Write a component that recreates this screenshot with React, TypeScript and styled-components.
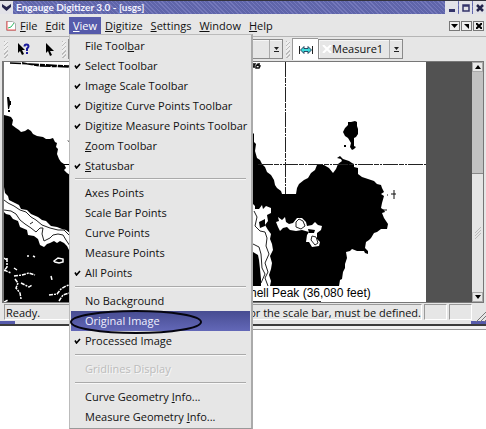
import React from 'react';
import styled, { createGlobalStyle, css } from 'styled-components';

const Global = createGlobalStyle`
  * { box-sizing: border-box; }
  body { margin: 0; background: #fff; font-family: "Open Sans", "Noto Sans", sans-serif; font-size: 11px; color: #111; }
  button, select { font: inherit; color: inherit; margin: 0; padding: 0; border: 0; background: none; }
`;

const Page = styled.div`
  position: relative;
  min-height: 100vh;
  overflow: hidden;
`;
const Window = styled.main`
  display: flex;
  flex-direction: column;
  background: #e6e6e6;
  border-top: 1px solid #33333d;
`;
const TitleBar = styled.header`
  display: flex;
  align-items: center;
  height: 13px;
  gap: 1px;
  background: repeating-linear-gradient(45deg, #7478bb 0 1px, #5f65aa 1px 3px);
`;
const Title = styled.h1`
  flex: 1;
  margin: 0 0 0 2px;
  font-family: Lato, "Open Sans", sans-serif;
  font-size: 10px;
  line-height: 13px;
  font-weight: 700;
  color: #f4f4ff;
  white-space: nowrap;
`;
const TitleButton = styled.button`
  display: flex;
  align-items: center;
  justify-content: center;
  width: 13px;
  height: 13px;
  background: #e2e2e8;
`;
const MenuBar = styled.nav`
  display: flex;
  align-items: center;
  height: 23px;
  padding: 1px 2px 0 6px;
  border-bottom: 1px solid #b5b5b5;
`;
const MenuTitle = styled.button<{ $open?: boolean }>`
  height: 17px;
  padding: 0 4px;
  line-height: 17px;
  white-space: nowrap;
  ${p => p.$open && css`background: #565bab; color: #fff;`}
`;
const Spacer = styled.div`
  flex: 1;
`;
const ChildButton = styled.button`
  display: flex;
  align-items: center;
  justify-content: center;
  width: 11px;
  height: 10px;
  margin-left: 1px;
  border: 1px solid #777;
  background: #eee;
`;
const ToolBar = styled.div`
  display: flex;
  align-items: center;
  height: 24px;
  padding-left: 4px;
`;
const Grip = styled.div`
  width: 4px;
  height: 17px;
  margin-right: 2px;
  background: repeating-linear-gradient(135deg, #bbb 0 1px, #eee 1px 3px);
`;
const ToolButton = styled.button<{ $pressed?: boolean }>`
  display: flex;
  flex: none;
  align-items: center;
  justify-content: center;
  width: 26px;
  height: 22px;
  ${p => p.$pressed && css`background: #fff; border: 1px solid #999; border-width: 1px 0 0 1px;`}
`;
const Combo = styled.label<{ $wide?: boolean }>`
  display: flex;
  flex: none;
  align-items: center;
  width: ${p => (p.$wide ? 215 : 85)}px;
  height: 20px;
  margin-right: 3px;
  padding-left: 3px;
  border: 1px solid #8a8a8a;
  box-shadow: inset 1px 1px #f6f6f6;
`;
const Select = styled.select`
  flex: 1;
  min-width: 0;
  appearance: none;
  line-height: 18px;
  outline: none;
`;
const ComboArrow = styled.span`
  display: flex;
  flex: none;
  align-items: center;
  justify-content: center;
  width: 13px;
  height: 18px;
  border-left: 1px solid #aaa;
`;
const Workspace = styled.section`
  display: flex;
  margin: 0 2px;
  border: 1px solid #777;
  border-width: 1px 1px 1px 2px;
  background: #525252;
`;
const MapCanvas = styled.svg`
  display: block;
  flex: none;
`;
const ScrollBar = styled.div`
  display: flex;
  flex-direction: column;
  width: 11px;
  margin-left: auto;
  background: #c2c2c2;
`;
const ScrollButton = styled.button`
  display: flex;
  align-items: center;
  justify-content: center;
  height: 10px;
  background: #e8e8e8;
  border: 1px solid #aaa;
`;
const ScrollTrack = styled.div`
  flex: 102;
`;
const ScrollThumb = styled.div`
  display: flex;
  flex: 120;
  align-items: center;
  justify-content: center;
  background: #e5e5e5;
  border-top: 1px solid #888;
`;
const StatusBar = styled.footer`
  display: flex;
  gap: 2px;
  height: 18px;
  padding: 1px 14px 0 4px;
  line-height: 16px;
  white-space: nowrap;
`;
const StatusField = styled.div<{ $small?: boolean }>`
  display: flex;
  justify-content: space-between;
  flex: ${p => (p.$small ? '0 0 23px' : '1')};
  height: 16px;
  padding: 0 0 0 1px;
  border: 1px solid #999;
  border-right-color: #fff;
  border-bottom-color: #fff;
`;
const FrameEdge = styled.div`
  display: flex;
  align-items: flex-end;
  justify-content: space-between;
  height: 5px;
  border-bottom: 2px solid #3c3c3c;
`;
const FrameCorner = styled.div`
  width: 15px;
  height: 3px;
  background: #565bab;
`;
const LowerEdge = styled.div`
  height: 4px;
  border-left: 250px solid #fff;
  background: linear-gradient(#f2f2f2 3px, #999 3px);
`;
const ResizeGrip = styled.svg`
  position: absolute;
  top: 312px;
  right: 0;
`;
const DropMenu = styled.div`
  position: absolute;
  top: 34px;
  left: 69px;
  width: 184px;
  padding: 1px;
  background: #e6e6e6;
  border: 1px solid #bbb;
  border-right: 2px solid #aaa;
  border-bottom-color: #999;
`;
const MenuItem = styled.button<{ $active?: boolean }>`
  display: flex;
  align-items: center;
  width: 100%;
  height: 20px;
  line-height: 20px;
  white-space: nowrap;
  text-align: left;
  ${p => p.$active && css`background: linear-gradient(#474c91, #6368b8); color: #f0f0ff;`}
  &:disabled { color: #bcbcbc; text-shadow: 1px 1px #f8f8f8; }
`;
const CheckSlot = styled.span`
  display: flex;
  width: 14px;
  padding-left: 3px;
`;
const Divider = styled.hr<{ $tight?: boolean }>`
  height: 2px;
  margin: ${p => (p.$tight ? 2 : 3)}px 4px 3px;
  border: 0;
  border-top: 1px solid #aaa;
  border-bottom: 1px solid #f8f8f8;
`;
const Marker = styled.svg`
  position: absolute;
  top: 309px;
  left: 69px;
  pointer-events: none;
`;

type Item = { text: string; key?: number; checked?: boolean; active?: boolean; disabled?: boolean };

const groups: Item[][] = [
  [
    { text: 'File Toolbar', key: 9 },
    { text: 'Select Toolbar', checked: true },
    { text: 'Image Scale Toolbar', checked: true },
    { text: 'Digitize Curve Points Toolbar', checked: true },
    { text: 'Digitize Measure Points Toolbar', checked: true },
    { text: 'Zoom Toolbar', key: 0 },
    { text: 'Statusbar', key: 0, checked: true },
  ],
  [
    { text: 'Axes Points' },
    { text: 'Scale Bar Points' },
    { text: 'Curve Points' },
    { text: 'Measure Points' },
    { text: 'All Points', checked: true },
  ],
  [
    { text: 'No Background' },
    { text: 'Original Image', active: true },
    { text: 'Processed Image', checked: true },
  ],
  [{ text: 'Gridlines Display', disabled: true }],
  [
    { text: 'Curve Geometry Info...', key: 15 },
    { text: 'Measure Geometry Info...', key: 17 },
  ],
];

const menuTitles = ['File', 'Edit', 'View', 'Digitize', 'Settings', 'Window', 'Help'];

const Mnemonic = ({ text, index }: { text: string; index?: number }) =>
  index === undefined ? <span>{text}</span> : (
    <span>{text.slice(0, index)}<u>{text[index]}</u>{text.slice(index + 1)}</span>
  );

const Down = () => (
  <svg width="5" height="7" viewBox="0 0 5 7"><path d="M0 1h5L2.500 4zM0 5h5v1H0z" fill="#222" /></svg>
);

function Coast() {
  return (
    <MapCanvas width="422" height="240" viewBox="4 62 422 240" aria-label="Scanned map">
      <path fill="#fff" d="M4 62h422v240H4z" />
      <path d="M10 63l20 1 39 2M22 63l18 3 29 1" stroke="#000" strokeWidth="1.500" strokeDasharray="11 1 5 1" fill="none" />
      <path d="M7 97h2l1 4h1v4h-1l-1 4H8zM8 110h2v2H8zM67 140l2 2v-1zM64 164h5v1h-5z" />
      <path d="M4 115L8 116 11 117 13 120 12 125 16 128 19 130 21 132 25 131 28 129 31 131 33 134 37 136 43 137 46 139 50 139 53 138 55 142 57 143 56 147 58 149 57 154 59 159 61 162 64 164 66 168 64 170 67 173 70 175V302H4z" />
      <path fill="#fff" d="M4 187L5 193 8 196 9 200 15 203 19 205 21 209 27 210 31 214 38 217 42 220 46 221 51 226 57 227 62 229 66 230 70 233V252L67 246 64 243 60 241 57 243 54 241 50 243 47 244 44 247 40 245 38 239 34 236 28 235 27 230 20 227 18 221 13 219 10 215 6 214 4 212z" />
      <path fill="none" stroke="#222" d="M4 200L8 203 14 206 20 210 26 212 31 217 36 220 42 225 50 228 58 230 64 230 70 236M4 210L11 211 16 214 20 220 25 224 31 228 36 232 40 228 43 228 42 234 44 241 50 238 53 235 58 234 63 235 66 240 70 246M30 224l3-2" />
      <path fill="none" stroke="#fff" strokeWidth="1.500" strokeDasharray="4 1 2 1" d="M4 258l3 2M7 258v9l-3 4M14 276l8-1 7-2 6 2M14 268l3 2M15 279l3 4-2 5 4 5 1 6M21 283l8 4 3-2M4 270l7 3M33 256l2 1M27 256h2M51 276l1 4M49 295l8-1 4-5 5-3 3-1M59 301l4-6 6-2M4 302l4-2" />
      <path d="M54 261l4-3 5 1v3l-4 1-4-1z" fill="none" stroke="#fff" strokeWidth="1.500" />
      <path d="M253 133L254 134 254 142 256 144 255 151 257 158 260 160 262 164 265 167 267 172 271 175 274 180 275 185 277 188 281 191 282 194H296L297 188 299 184 304 180 308 178 311 173 315 170 317 165 324 165 329 168 333 173 336 169 338 164 342 161 341 159 337 158 340 156 343 159 349 161 352 163 354 164 354 167 358 168 358 174 362 177 368 179 374 181 377 184 381 185 382 188 384 192 381 194 384 196 382 203 381 208 384 210 385 212 382 213 384 218 388 224 387 229 381 229 377 232 374 233 371 238 369 240 366 242 365 248 368 251 368 254 365 253 364 251 357 251 352 249 350 251 346 252 347 258 345 264 345 268 343 272 342 279 340 280 339 286H253z" />
      <path d="M348 122h3l4-1 2 1v4l1 3v5l-2 3-2 1v8l2 1-2 2-2 1-2-3 1-4-3-5-3-2-2-4 2-4 3-3zM344 145h2v2h-2z" />
      <path fill="#fff" d="M253 204L255 206 255 209 259 209 262 205 263 209 266 206 271 208 271 213 267 215 268 221 265 225 268 230 271 234 270 239 272 244 273 250 270 256 272 263 271 269 269 275 271 281 270 286H261L261 279 260 269 259 260 258 255 253 252zM276 222L279 221 278 217 282 220 285 217 286 222 289 224 293 223 297 218 302 218 306 222 307 226 312 225 315 222 318 225 322 226 321 230 317 233 317 239 320 242 319 246 312 247 309 242 306 242 307 235 309 232 302 230 296 231 290 230 287 227 283 228 280 231 278 227z" />
      <path d="M259 222L265 219 265 226 260 228zM308 229L315 230 314 233 309 233z" />
      <path fill="none" stroke="#222" d="M254 211L257 217 255 226 260 231 265 232 267 238 266 246 269 254 265 263 268 272 265 278 268 286M253 244L259 247 261 254 262 268 265 274 261 283M299 219L303 221 305 226 301 229 296 227 296 222zM312 236L316 237 318 243 315 245 311 240z" />
      <path stroke="#222" fill="none" strokeDasharray="15 1 5 1 2 1" d="M285.500 62v132M258 164.500h168" />
      <path d="M394 190v9M391 194h5M387 195h1M383 210h4" stroke="#111" fill="none" />
      <path fill="none" stroke="#111" strokeWidth="1.500" d="M253 64h2l-2 3h2M260 64h-2l-2 2v2h3l1-2-3-1" />
      <path d="M253 301.500h68" stroke="#333" />
      <text x="250" y="297" fontFamily='"Liberation Sans", sans-serif' fontSize="12">hell Peak (36,080 feet)</text>
    </MapCanvas>
  );
}

export default function App() {
  return (
    <Page>
      <Global />
      <Window>
        <TitleBar>
          <TitleButton aria-label="Window menu">
            <svg width="9" height="8" viewBox="0 0 9 8"><path d="M0 0l4.500 3L9 0v3L4.500 7 0 3z" fill="#24244c" /></svg>
          </TitleButton>
          <Title>Engauge Digitizer 3.0 - [usgs]</Title>
          <TitleButton aria-label="Minimize"><svg width="8" height="8"><path d="M1 5h6v3H1z" fill="#34346a" /></svg></TitleButton>
          <TitleButton aria-label="Maximize"><svg width="8" height="8"><path d="M1 1h6v6H1zM1 2h6" fill="none" stroke="#34346a" strokeWidth="1.500" /></svg></TitleButton>
          <TitleButton aria-label="Close"><svg width="8" height="8"><path d="M1 1l6 6M7 1L1 7" stroke="#24244c" strokeWidth="2.500" /></svg></TitleButton>
        </TitleBar>
        <MenuBar>
          <svg width="10" height="10" viewBox="0 0 10 10">
            <path d="M.5.500h6l3 2v7h-9z" fill="#fff" stroke="#aaa" />
            <path d="M1 0v9h9" stroke="#e55" fill="none" /><path d="M2 7l3-1 3-4" stroke="#3b6" fill="none" />
          </svg>
          {menuTitles.map(title => (
            <MenuTitle key={title} $open={title === 'View'}><Mnemonic text={title} index={0} /></MenuTitle>
          ))}
          <Spacer />
          <ChildButton aria-label="Minimize document"><svg width="7" height="6"><path d="M0 1h7L3.500 5z" /></svg></ChildButton>
          <ChildButton aria-label="Restore document"><svg width="6" height="6"><path d="M0 1h5v5z" /></svg></ChildButton>
          <ChildButton aria-label="Close document"><svg width="6" height="6"><path d="M0 0l6 6M6 0L0 6" stroke="#000" strokeWidth="2" /></svg></ChildButton>
        </MenuBar>
        <ToolBar>
          <Grip />
          <ToolButton aria-label="What's this">
            <svg width="13" height="13" viewBox="0 0 13 13">
              <path d="M1 0v10l2-2 2 4 2-1-2-4h3z" />
              <path d="M7.500 3.500q0-2 2-2t2 2q0 1-1.500 2V8M10 9v2" fill="none" stroke="#1a1a9c" strokeWidth="2" />
            </svg>
          </ToolButton>
          <ToolButton aria-label="Select">
            <svg width="9" height="13" viewBox="0 0 9 13"><path d="M1 0v10l2-2 2 5 2-1-2-4h4z" /></svg>
          </ToolButton>
          <Grip />
          <Combo $wide>
            <Select aria-label="Curve"><option /></Select>
            <ComboArrow><Down /></ComboArrow>
          </Combo>
          <Grip />
          <ToolButton $pressed aria-label="Measure point">
            <svg width="14" height="10" viewBox="0 0 14 10">
              <path d="M.5 1v8M13.500 1v8" stroke="#222" />
              <path d="M1.500 5L5 1.500v2h4v-2L12.500 5 9 8.500v-2H5v2z" fill="#3fdcdc" stroke="#124" strokeWidth=".8" />
            </svg>
          </ToolButton>
          <Combo>
            <svg width="10" height="8"><path d="M1 0l8 8M9 0L1 8" stroke="#fff" strokeWidth="2" /></svg>
            <Select aria-label="Measure"><option>Measure1</option></Select>
            <ComboArrow><Down /></ComboArrow>
          </Combo>
        </ToolBar>
        <Workspace>
          <Coast />
          <ScrollBar>
            <ScrollButton aria-label="Scroll up"><svg width="6" height="4"><path d="M0 4h6L3 0z" /></svg></ScrollButton>
            <ScrollTrack />
            <ScrollThumb><svg width="6" height="12"><path d="M0 6l6-6M0 9l6-6M0 12l6-6" stroke="#bbb" /></svg></ScrollThumb>
            <ScrollButton aria-label="Scroll down"><svg width="6" height="4"><path d="M0 0h6L3 4z" /></svg></ScrollButton>
          </ScrollBar>
        </Workspace>
        <StatusBar>
          <StatusField><span>Ready.</span><span>or the scale bar, must be defined.</span></StatusField>
          <StatusField $small />
          <StatusField $small />
        </StatusBar>
        <FrameEdge><FrameCorner /><FrameCorner /></FrameEdge>
        <LowerEdge />
      </Window>
      <ResizeGrip width="10" height="10"><path d="M0 10L10 0M4 10l6-6M8 10l2-2" stroke="#777" /></ResizeGrip>
      <DropMenu role="menu" aria-label="View">
        {groups.map((group, g) => (
          <React.Fragment key={g}>
            {g > 0 && <Divider $tight={g === 1} />}
            {group.map(item => (
              <MenuItem key={item.text} role="menuitem" $active={item.active} disabled={item.disabled}>
                <CheckSlot>
                  {item.checked && <svg width="7" height="6"><path d="M1 2.500l1.500 2.500L6 1" fill="none" stroke="#000" strokeWidth="1.600" /></svg>}
                </CheckSlot>
                <Mnemonic text={item.text} index={item.key} />
              </MenuItem>
            ))}
          </React.Fragment>
        ))}
      </DropMenu>
      <Marker width="134" height="26"><ellipse cx="67" cy="13" rx="65" ry="11" fill="none" stroke="#050510" strokeWidth="2" /></Marker>
    </Page>
  );
}
